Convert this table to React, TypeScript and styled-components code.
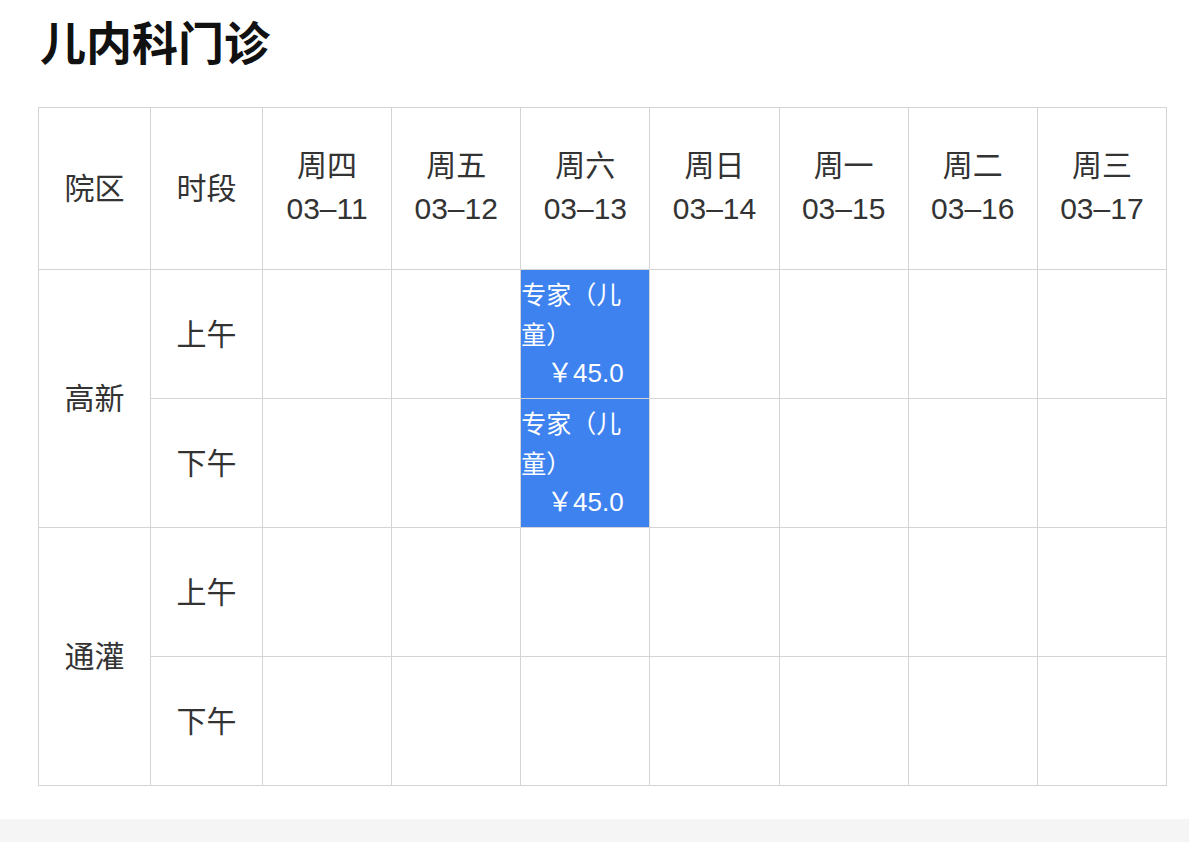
import React from 'react';
import styled, { createGlobalStyle } from 'styled-components';

const GlobalStyle = createGlobalStyle`
  html, body {
    margin: 0;
    padding: 0;
    background: #fff;
  }
  body {
    font-family: "Liberation Sans", "Noto Sans CJK SC", sans-serif;
    color: #333;
  }
`;

const Page = styled.div`
  width: 1189px;
  height: 842px;
  display: flex;
  flex-direction: column;
  overflow: hidden;
`;

const Title = styled.h1`
  margin: 12px 0 0 40px;
  height: 56px;
  font-size: 46px;
  line-height: 56px;
  font-weight: 700;
  color: #111;
  font-family: "Noto Sans CJK SC", sans-serif;
`;

const Grid = styled.div`
  margin: 39px 0 0 38px;
  width: 1129px;
  display: grid;
  grid-template-columns: 112px 112px repeat(7, 1fr);
  grid-template-rows: 162px repeat(4, 129px);
  border-top: 1px solid #d4d4d4;
  border-left: 1px solid #d4d4d4;
  box-sizing: border-box;
`;

const Cell = styled.div<{ $span?: number }>`
  grid-row: span ${p => p.$span ?? 1};
  border-right: 1px solid #d4d4d4;
  border-bottom: 1px solid #d4d4d4;
  padding-bottom: 5px;
  display: flex;
  flex-direction: column;
  align-items: center;
  justify-content: center;
  font-size: 30px;
  line-height: 46px;
  color: #333;
  text-align: center;
  min-width: 0;
`;

const Label = styled.span`
  font-family: "Noto Sans CJK SC", sans-serif;
`;

const DateText = styled.span`
  font-family: "Liberation Sans", sans-serif;
`;

const SlotCell = styled.div`
  border-right: 1px solid #d4d4d4;
  border-bottom: 1px solid #d4d4d4;
  padding-bottom: 3px;
  background: #3e82f0;
  color: #fff;
  display: flex;
  flex-direction: column;
  justify-content: center;
  font-size: 25px;
  line-height: 40px;
  min-width: 0;
`;

const SlotName = styled.div`
  text-align: left;
  font-family: "Noto Sans CJK SC", sans-serif;
`;

const SlotPrice = styled.div`
  text-align: center;
  font-family: "Liberation Sans", "Noto Sans CJK SC", sans-serif;
  font-size: 26px;
`;

const Footer = styled.div`
  margin-top: auto;
  height: 23px;
  background: #f5f5f5;
`;

const DAYS = [
  { name: '周四', date: '03–11' },
  { name: '周五', date: '03–12' },
  { name: '周六', date: '03–13' },
  { name: '周日', date: '03–14' },
  { name: '周一', date: '03–15' },
  { name: '周二', date: '03–16' },
  { name: '周三', date: '03–17' },
];

type Slot = { name: string; price: string } | null;

const CAMPUSES: { name: string; periods: { label: string; slots: Slot[] }[] }[] = [
  {
    name: '高新',
    periods: [
      { label: '上午', slots: [null, null, { name: '专家（儿童）', price: '￥45.0' }, null, null, null, null] },
      { label: '下午', slots: [null, null, { name: '专家（儿童）', price: '￥45.0' }, null, null, null, null] },
    ],
  },
  {
    name: '通灌',
    periods: [
      { label: '上午', slots: [null, null, null, null, null, null, null] },
      { label: '下午', slots: [null, null, null, null, null, null, null] },
    ],
  },
];

export default function App() {
  return (
    <Page>
      <GlobalStyle />
      <Title>儿内科门诊</Title>
      <Grid>
        <Cell><Label>院区</Label></Cell>
        <Cell><Label>时段</Label></Cell>
        {DAYS.map(d => (
          <Cell key={d.date}>
            <Label>{d.name}</Label>
            <DateText>{d.date}</DateText>
          </Cell>
        ))}
        {CAMPUSES.map(c => (
          <React.Fragment key={c.name}>
            <Cell $span={2}><Label>{c.name}</Label></Cell>
            {c.periods.map(p => (
              <React.Fragment key={p.label}>
                <Cell><Label>{p.label}</Label></Cell>
                {p.slots.map((s, i) =>
                  s ? (
                    <SlotCell key={i}>
                      <SlotName>{s.name}</SlotName>
                      <SlotPrice>{s.price}</SlotPrice>
                    </SlotCell>
                  ) : (
                    <Cell key={i} />
                  )
                )}
              </React.Fragment>
            ))}
          </React.Fragment>
        ))}
      </Grid>
      <Footer />
    </Page>
  );
}
